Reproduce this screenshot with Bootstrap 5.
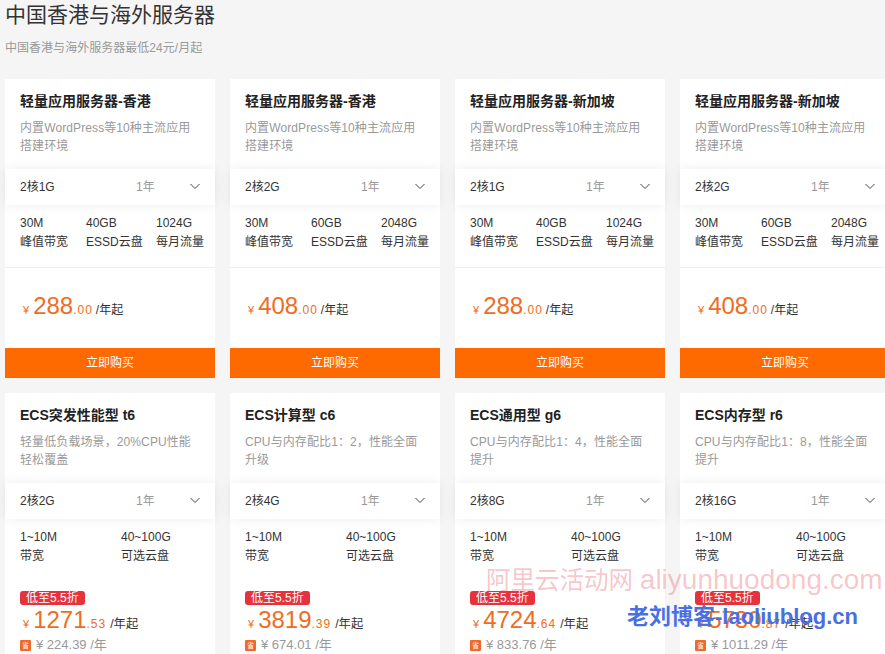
<!DOCTYPE html>
<html lang="zh-CN">
<head>
<meta charset="utf-8">
<title>中国香港与海外服务器</title>
<link rel="stylesheet" href="https://cdn.jsdelivr.net/npm/bootstrap@5.3.0/dist/css/bootstrap.min.css">
<style>
html,body{height:654px;overflow:hidden}
body{background:#f5f5f5;font-family:"Liberation Sans","Noto Sans CJK SC",sans-serif;font-size:12px;color:#333;position:relative}
.page-wrap{padding:1px 0 0 5px;width:1000px}
.page-title{font-size:21px;font-weight:400;line-height:28px;margin:0;color:#333;height:28px}
.page-sub{font-size:12px;line-height:18px;color:#999;margin:10px 0 22px;letter-spacing:.03px}
.plans{display:grid;grid-template-columns:repeat(4,210px);gap:15px}
.plan{background:#fff;height:299px;position:relative}
.plan-head{padding:12px 15px 0;height:90px}
.plan-name{font-size:14px;font-weight:700;line-height:20px;color:#222;margin:0 0 8px;white-space:nowrap}
.plan-desc{font-size:12px;line-height:18px;color:#999;margin:0;letter-spacing:.1px;white-space:nowrap}
.picker{height:36px;padding:0 15px;background:#fff;box-shadow:0 0 12px rgba(0,0,0,.07);position:relative}
.picker-term{color:#999;position:absolute;left:131px;line-height:36px}
.chev{position:absolute;left:185px;top:14px}
.specs{padding:9px 15px 0;height:63px;border-bottom:1px solid #eee;line-height:19px;color:#333;margin:0}
.specs>div{white-space:nowrap}
.s1{width:66px}.s2{width:70px}.s3{width:44px}
.sw{width:101px}
.price-box{padding:0 15px;height:80px;position:relative;white-space:nowrap}
.price-line{position:absolute;left:18px;top:24px;line-height:28px;color:#f06c23}
.cny{font-size:11px;margin-right:4px}
.big{font-size:24px}
.cents{font-size:12px;letter-spacing:1px}
.unit{color:#333;font-size:12px;margin-left:3px}
.buy{display:block;height:30px;line-height:30px;background:#ff6a00;color:#fff;text-align:center;font-size:12px;border:0;border-radius:0;padding:0;width:100%}
.buy:hover{background:#ff6a00;color:#fff}
.tag{position:absolute;left:15px;top:9px;background:#e5323c;color:#fff;border-radius:3px;height:14px;line-height:14px;padding:0 6px;font-size:12px}
.promo .specs{border-bottom:0}
.promo .unit{margin-left:4px;font-size:12.3px}
.save{position:absolute;left:15px;top:56px;display:flex;align-items:center;color:#999;font-size:13px;line-height:14px;gap:5px}
.save-ic{width:11px;height:11px;background:#f0682c;color:#fff;font-size:7px;line-height:11px;text-align:center;border-radius:1px}
.wm1{position:absolute;left:486px;top:563px;font-size:24.5px;line-height:34px;color:rgba(231,76,90,.32);white-space:nowrap}
.wm1 span{font-size:28px}
.wm2{position:absolute;left:627px;top:603px;font-size:22px;line-height:28px;font-weight:700;color:#4a6fe3;white-space:nowrap}
</style>
</head>
<body>
<div class="page-wrap">
<h1 class="page-title">中国香港与海外服务器</h1>
<p class="page-sub">中国香港与海外服务器最低24元/月起</p>
<div class="plans">

<div class="plan"><div class="plan-head"><h2 class="plan-name">轻量应用服务器-香港</h2><p class="plan-desc">内置WordPress等10种主流应用<br>搭建环境</p></div>
<div class="picker d-flex align-items-center"><span>2核1G</span><span class="picker-term">1年</span><svg class="chev" width="10" height="7" viewBox="0 0 10 7"><path d="M.5 1 5 5.500 9.500 1" fill="none" stroke="#444" stroke-width="1"/></svg></div>
<div class="specs d-flex"><div class="s1">30M<br>峰值带宽</div><div class="s2">40GB<br>ESSD云盘</div><div class="s3">1024G<br>每月流量</div></div>
<div class="price-box"><div class="price-line"><span class="cny">¥</span><span class="big">288</span><span class="cents">.00</span><span class="unit">/年起</span></div></div>
<a class="btn buy" href="#">立即购买</a></div>

<div class="plan"><div class="plan-head"><h2 class="plan-name">轻量应用服务器-香港</h2><p class="plan-desc">内置WordPress等10种主流应用<br>搭建环境</p></div>
<div class="picker d-flex align-items-center"><span>2核2G</span><span class="picker-term">1年</span><svg class="chev" width="10" height="7" viewBox="0 0 10 7"><path d="M.5 1 5 5.500 9.500 1" fill="none" stroke="#444" stroke-width="1"/></svg></div>
<div class="specs d-flex"><div class="s1">30M<br>峰值带宽</div><div class="s2">60GB<br>ESSD云盘</div><div class="s3">2048G<br>每月流量</div></div>
<div class="price-box"><div class="price-line"><span class="cny">¥</span><span class="big">408</span><span class="cents">.00</span><span class="unit">/年起</span></div></div>
<a class="btn buy" href="#">立即购买</a></div>

<div class="plan"><div class="plan-head"><h2 class="plan-name">轻量应用服务器-新加坡</h2><p class="plan-desc">内置WordPress等10种主流应用<br>搭建环境</p></div>
<div class="picker d-flex align-items-center"><span>2核1G</span><span class="picker-term">1年</span><svg class="chev" width="10" height="7" viewBox="0 0 10 7"><path d="M.5 1 5 5.500 9.500 1" fill="none" stroke="#444" stroke-width="1"/></svg></div>
<div class="specs d-flex"><div class="s1">30M<br>峰值带宽</div><div class="s2">40GB<br>ESSD云盘</div><div class="s3">1024G<br>每月流量</div></div>
<div class="price-box"><div class="price-line"><span class="cny">¥</span><span class="big">288</span><span class="cents">.00</span><span class="unit">/年起</span></div></div>
<a class="btn buy" href="#">立即购买</a></div>

<div class="plan"><div class="plan-head"><h2 class="plan-name">轻量应用服务器-新加坡</h2><p class="plan-desc">内置WordPress等10种主流应用<br>搭建环境</p></div>
<div class="picker d-flex align-items-center"><span>2核2G</span><span class="picker-term">1年</span><svg class="chev" width="10" height="7" viewBox="0 0 10 7"><path d="M.5 1 5 5.500 9.500 1" fill="none" stroke="#444" stroke-width="1"/></svg></div>
<div class="specs d-flex"><div class="s1">30M<br>峰值带宽</div><div class="s2">60GB<br>ESSD云盘</div><div class="s3">2048G<br>每月流量</div></div>
<div class="price-box"><div class="price-line"><span class="cny">¥</span><span class="big">408</span><span class="cents">.00</span><span class="unit">/年起</span></div></div>
<a class="btn buy" href="#">立即购买</a></div>

<div class="plan promo"><div class="plan-head"><h2 class="plan-name">ECS突发性能型 t6</h2><p class="plan-desc">轻量低负载场景，20%CPU性能<br>轻松覆盖</p></div>
<div class="picker d-flex align-items-center"><span>2核2G</span><span class="picker-term">1年</span><svg class="chev" width="10" height="7" viewBox="0 0 10 7"><path d="M.5 1 5 5.500 9.500 1" fill="none" stroke="#444" stroke-width="1"/></svg></div>
<div class="specs d-flex"><div class="sw">1~10M<br>带宽</div><div>40~100G<br>可选云盘</div></div>
<div class="price-box"><span class="tag">低至5.5折</span><div class="price-line"><span class="cny">¥</span><span class="big">1271</span><span class="cents">.53</span><span class="unit">/年起</span></div><div class="save"><span class="save-ic">省</span><span>¥ 224.39 /年</span></div></div></div>

<div class="plan promo"><div class="plan-head"><h2 class="plan-name">ECS计算型 c6</h2><p class="plan-desc">CPU与内存配比1：2，性能全面<br>升级</p></div>
<div class="picker d-flex align-items-center"><span>2核4G</span><span class="picker-term">1年</span><svg class="chev" width="10" height="7" viewBox="0 0 10 7"><path d="M.5 1 5 5.500 9.500 1" fill="none" stroke="#444" stroke-width="1"/></svg></div>
<div class="specs d-flex"><div class="sw">1~10M<br>带宽</div><div>40~100G<br>可选云盘</div></div>
<div class="price-box"><span class="tag">低至5.5折</span><div class="price-line"><span class="cny">¥</span><span class="big">3819</span><span class="cents">.39</span><span class="unit">/年起</span></div><div class="save"><span class="save-ic">省</span><span>¥ 674.01 /年</span></div></div></div>

<div class="plan promo"><div class="plan-head"><h2 class="plan-name">ECS通用型 g6</h2><p class="plan-desc">CPU与内存配比1：4，性能全面<br>提升</p></div>
<div class="picker d-flex align-items-center"><span>2核8G</span><span class="picker-term">1年</span><svg class="chev" width="10" height="7" viewBox="0 0 10 7"><path d="M.5 1 5 5.500 9.500 1" fill="none" stroke="#444" stroke-width="1"/></svg></div>
<div class="specs d-flex"><div class="sw">1~10M<br>带宽</div><div>40~100G<br>可选云盘</div></div>
<div class="price-box"><span class="tag">低至5.5折</span><div class="price-line"><span class="cny">¥</span><span class="big">4724</span><span class="cents">.64</span><span class="unit">/年起</span></div><div class="save"><span class="save-ic">省</span><span>¥ 833.76 /年</span></div></div></div>

<div class="plan promo"><div class="plan-head"><h2 class="plan-name">ECS内存型 r6</h2><p class="plan-desc">CPU与内存配比1：8，性能全面<br>提升</p></div>
<div class="picker d-flex align-items-center"><span>2核16G</span><span class="picker-term">1年</span><svg class="chev" width="10" height="7" viewBox="0 0 10 7"><path d="M.5 1 5 5.500 9.500 1" fill="none" stroke="#444" stroke-width="1"/></svg></div>
<div class="specs d-flex"><div class="sw">1~10M<br>带宽</div><div>40~100G<br>可选云盘</div></div>
<div class="price-box"><span class="tag">低至5.5折</span><div class="price-line"><span class="cny">¥</span><span class="big">5730</span><span class="cents">.87</span><span class="unit">/年起</span></div><div class="save"><span class="save-ic">省</span><span>¥ 1011.29 /年</span></div></div></div>

</div>
</div>
<div class="wm1">阿里云活动网 <span>aliyunhuodong.com</span></div>
<div class="wm2">老刘博客-laoliublog.cn</div>
<script src="https://cdn.jsdelivr.net/npm/bootstrap@5.3.0/dist/js/bootstrap.bundle.min.js"></script>
</body>
</html>
